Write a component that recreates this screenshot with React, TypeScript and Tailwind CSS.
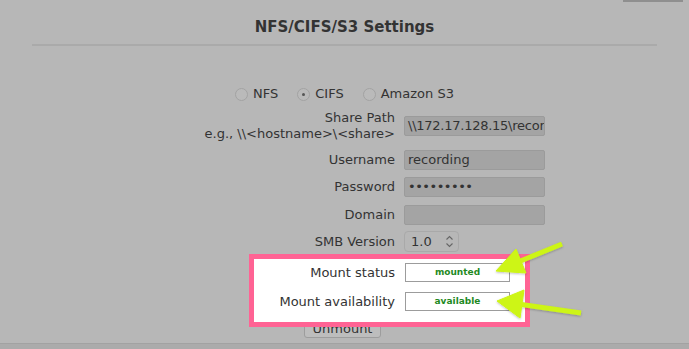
import React from 'react';

const labelCls = 'w-[404px] shrink-0 text-right text-[13px] leading-[16px] pr-[9px]';
const fieldCls =
  'w-[141px] h-[20px] rounded-[2px] bg-[#a4a4a4] border border-[#9b9b9b] px-[3px] text-[13px] leading-[18px] text-[#333] overflow-hidden whitespace-nowrap';

function Radio({ label, checked }: { label: string; checked?: boolean }) {
  return (
    <label className="flex items-center gap-[5px]">
      <span className="w-[13px] h-[13px] rounded-full border border-[#a3a3a3] bg-[#bababa] flex items-center justify-center">
        {checked && <span className="w-[3px] h-[3px] rounded-full bg-[#555]" />}
      </span>
      <span>{label}</span>
    </label>
  );
}

function Arrows() {
  return (
    <svg className="absolute inset-0 pointer-events-none z-20" width="689" height="349">
      <defs>
        <filter id="sh" x="-20%" y="-20%" width="140%" height="140%">
          <feDropShadow dx="0" dy="1" stdDeviation="1" floodColor="#000" floodOpacity="0.25" />
        </filter>
      </defs>
      <g fill="#cdf514" stroke="#cdf514" filter="url(#sh)">
        {/* arrow to mount status */}
        <line x1="562" y1="244" x2="518" y2="262" strokeWidth="5" />
        <polygon points="496,271 516,249 526,273" strokeWidth="1" strokeLinejoin="round" />
        {/* arrow to availability */}
        <line x1="581" y1="313" x2="518" y2="304" strokeWidth="5" />
        <polygon points="497,301 524,290 520,318" strokeWidth="1" strokeLinejoin="round" />
      </g>
    </svg>
  );
}

export default function App() {
  return (
    <div className="relative w-[689px] h-[349px] overflow-hidden bg-[#b7b7b7] text-[#333] font-['DejaVu_Sans',Verdana,sans-serif]">
      {/* edge of a button above the panel */}
      <div className="flex justify-end pr-[6px]">
        <div className="w-[60px] h-[2px] bg-[#8f8f8f]" />
      </div>

      <h2 className="mt-[15px] text-center text-[15px] font-bold leading-[20px] text-[#333]">NFS/CIFS/S3 Settings</h2>
      <div className="mx-[32px] mt-[7px] h-[2px] bg-[#aaaaaa]" />

      <div className="mt-[39px] flex justify-center items-center gap-[19px] text-[13px] leading-[18px]">
        <Radio label="NFS" />
        <Radio label="CIFS" checked />
        <Radio label="Amazon S3" />
      </div>

      <div className="mt-[7px] flex items-center">
        <div className={labelCls}>
          <div>Share Path</div>
          <div>{'e.g., \\\\<hostname>\\<share>'}</div>
        </div>
        <div className={fieldCls + ' tracking-[-0.25px]'}>{'\\\\172.17.128.15\\recording'}</div>
      </div>

      <div className="mt-[8px] flex items-center">
        <div className={labelCls}>Username</div>
        <div className={fieldCls}>recording</div>
      </div>

      <div className="mt-[7px] flex items-center">
        <div className={labelCls}>Password</div>
        <div className={fieldCls + ' tracking-[-0.5px]'}>•••••••••</div>
      </div>

      <div className="mt-[8px] flex items-center">
        <div className={labelCls}>Domain</div>
        <div className={fieldCls} />
      </div>

      <div className="mt-[6px] flex items-center">
        <div className={labelCls}>SMB Version</div>
        <div className="w-[55px] h-[21px] rounded-[4px] border border-[#a9a9a9] flex items-center justify-between pl-[6px] pr-[4px] text-[13px]">
          <span>1.0</span>
          <svg width="9" height="13" viewBox="0 0 9 13" fill="none" stroke="#666" strokeWidth="1.1">
            <path d="M1.5 4.5 L4.5 1.5 L7.5 4.5" />
            <path d="M1.5 8.5 L4.5 11.5 L7.5 8.5" />
          </svg>
        </div>
      </div>

      <div className="relative z-10 mt-[11px]">
        <div className="absolute -z-10 left-[249px] w-[281px] top-[-9px] bottom-[-16px] bg-white border-[5px] border-[#ff6394]" />
        <div className="flex items-center">
          <div className={labelCls}>Mount status</div>
          <div className="ml-[1px] w-[105px] h-[19px] border border-[#9c9c9c] bg-white text-center text-[9px] leading-[17px] font-bold text-[#1f8a1f]">
            mounted
          </div>
        </div>
        <div className="mt-[10px] flex items-center">
          <div className={labelCls}>Mount availability</div>
          <div className="ml-[1px] w-[105px] h-[19px] border border-[#9c9c9c] bg-white text-center text-[9px] leading-[17px] font-bold text-[#1f8a1f]">
            available
          </div>
        </div>
      </div>

      <div className="mt-[8px] flex">
        <button className="ml-[304px] w-[77px] h-[19px] rounded-[3px] border border-[#9d9d9d] bg-[#bdbdbd] text-[13px] leading-[17px] text-[#333]">
          Unmount
        </button>
      </div>

      <div className="mt-[5px] h-[6px] border-t border-[#a2a2a2] bg-[#ababab]" />

      <Arrows />
    </div>
  );
}
